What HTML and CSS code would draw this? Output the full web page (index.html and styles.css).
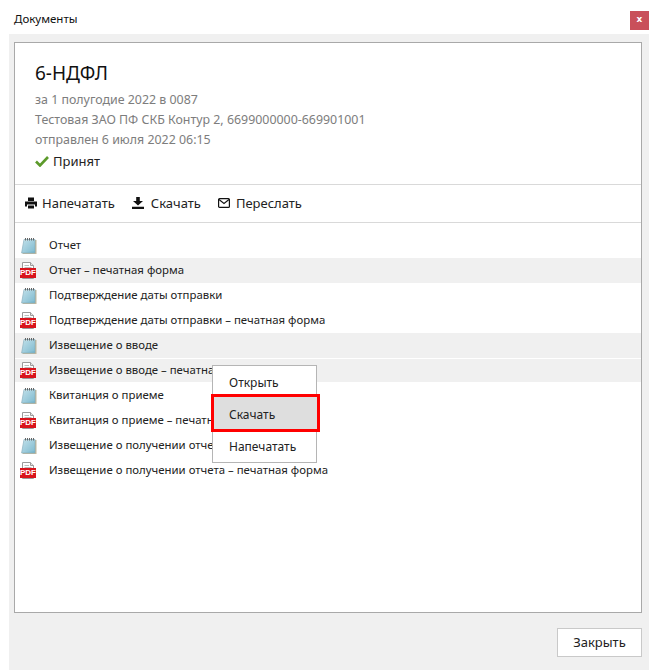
FILE: index.html
```html
<!DOCTYPE html>
<html lang="ru">
<head>
<meta charset="utf-8">
<title>Документы</title>
<link rel="stylesheet" href="styles.css">
</head>
<body>
<svg class="defs" width="0" height="0">
  <defs>
    <linearGradient id="pad" x1="0" y1="0" x2="1" y2="1">
      <stop offset="0" stop-color="#d8eef4"/>
      <stop offset="1" stop-color="#6fb2c9"/>
    </linearGradient>
    <symbol id="note" viewBox="0 0 16 18">
      <path d="M4 3H15.500V17H1.500Z" fill="#c2b89c"/>
      <path d="M3 2.500H14V16H.6Z" fill="url(#pad)" stroke="#86adbb" stroke-width=".7"/>
      <path d="M2.600 5H13.500M2.300 7H13.500M1.900 9H13.500M1.600 11H13.500M1.200 13H13.500" stroke="#9cc9d8" stroke-width=".7"/>
      <path d="M4.500 3.500V1M6.500 3.500V1M8.500 3.500V1M10.500 3.500V1M12.500 3.500V1" stroke="#666" stroke-width="1"/>
    </symbol>
    <symbol id="pdf" viewBox="0 0 16 18">
      <path d="M2.500 .5H10.500L13.500 3.500V16.500H2.500Z" fill="#fff" stroke="#9a9a9a"/>
      <path d="M10.500 .5V3.500H13.500" fill="#e4e4e4" stroke="#9a9a9a"/>
      <path d="M4.500 3.500H9M4.500 5.500H11.500" stroke="#bbb"/>
      <rect x="0" y="6" width="16" height="10" fill="#d9141c"/>
    </symbol>
  </defs>
</svg>
<div class="window">
  <header class="titlebar">
    <span class="title">Документы</span>
    <button class="close" type="button">x</button>
  </header>
  <main class="panel">
    <section class="box">
      <div class="info">
        <h1 class="heading">6-НДФЛ</h1>
        <p class="meta">за 1 полугодие 2022 в 0087</p>
        <p class="meta">Тестовая ЗАО ПФ СКБ Контур 2, 6699000000-669901001</p>
        <p class="meta">отправлен 6 июля 2022 06:15</p>
        <p class="status">
          <svg class="check" viewBox="0 0 14 12" width="14" height="12"><path d="M1 6.500 5 10.500 13 2" fill="none" stroke="#5c9a2b" stroke-width="2.600"/></svg>
          <span>Принят</span>
        </p>
      </div>
      <nav class="toolbar">
        <a class="action">
          <svg viewBox="0 0 12 12" width="12" height="12"><path d="M3 0.500H9V4H3Z M0 4.500H12V9.500H10V7.500H2V9.500H0Z M3 8.500H9V11.500H3Z" fill="#111"/></svg>
          <span>Напечатать</span>
        </a>
        <a class="action wide">
          <svg viewBox="0 0 12 12" width="12" height="12"><path d="M4.200 0H7.800V4H11L6 8.500 1 4H4.200Z M0 9.800H12V12H0Z" fill="#111"/></svg>
          <span>Скачать</span>
        </a>
        <a class="action mid">
          <svg viewBox="0 0 12 10" width="12" height="10"><rect x=".6" y=".6" width="10.800" height="8.800" rx="1" fill="none" stroke="#111" stroke-width="1.200"/><path d="M1 1.500 6 5.500 11 1.500" fill="none" stroke="#111" stroke-width="1.100"/></svg>
          <span>Переслать</span>
        </a>
      </nav>
      <ul class="files">
        <li class="file"><svg class="ficon"><use href="#note"/></svg><span class="fname">Отчет</span></li>
        <li class="file alt"><span class="pdf"><svg class="ficon"><use href="#pdf"/></svg><b>PDF</b></span><span class="fname">Отчет – печатная форма</span></li>
        <li class="file"><svg class="ficon"><use href="#note"/></svg><span class="fname">Подтверждение даты отправки</span></li>
        <li class="file"><span class="pdf"><svg class="ficon"><use href="#pdf"/></svg><b>PDF</b></span><span class="fname">Подтверждение даты отправки – печатная форма</span></li>
        <li class="file alt"><svg class="ficon"><use href="#note"/></svg><span class="fname">Извещение о вводе</span></li>
        <li class="file alt short"><span class="pdf"><svg class="ficon"><use href="#pdf"/></svg><b>PDF</b></span><span class="fname">Извещение о вводе – печатная форма</span></li>
        <li class="file"><svg class="ficon"><use href="#note"/></svg><span class="fname">Квитанция о приеме</span></li>
        <li class="file"><span class="pdf"><svg class="ficon"><use href="#pdf"/></svg><b>PDF</b></span><span class="fname">Квитанция о приеме – печатная форма</span></li>
        <li class="file"><svg class="ficon"><use href="#note"/></svg><span class="fname">Извещение о получении отчета</span></li>
        <li class="file"><span class="pdf"><svg class="ficon"><use href="#pdf"/></svg><b>PDF</b></span><span class="fname">Извещение о получении отчета – печатная форма</span></li>
      </ul>
    </section>
    <footer class="footer">
      <button class="closebtn" type="button">Закрыть</button>
    </footer>
  </main>
  <div class="menu">
    <div class="mitem">Открыть</div>
    <div class="mitem active">Скачать</div>
    <div class="mitem">Напечатать</div>
  </div>
</div>
</body>
</html>
```
FILE: styles.css
```css
* { box-sizing: border-box; }
html, body { margin: 0; padding: 0; }
body {
  width: 659px;
  height: 670px;
  overflow: hidden;
  background: #fff;
  font-family: "Noto Sans", "Open Sans", sans-serif;
  color: #222;
}
.defs { position: absolute; }
.window {
  position: relative;
  display: flex;
  flex-direction: column;
  height: 670px;
}
.titlebar {
  height: 34px;
  flex: none;
  display: flex;
  align-items: flex-start;
  justify-content: space-between;
  padding: 11px 10px 0 14px;
}
.title { font-size: 11.500px; line-height: 16px; color: #111; }
.close {
  width: 19px;
  height: 19px;
  border: 0;
  padding: 0 0 3px;
  background: #c9505a;
  color: #fff;
  font: bold 9px/16px "DejaVu Sans", sans-serif;
}
.panel {
  flex: 1;
  margin: 0 10px 0 9px;
  padding: 8px 7px 0 5px;
  background: #f0f0f0;
  display: flex;
  flex-direction: column;
}
.box {
  height: 571px;
  flex: none;
  background: #fff;
  border: 1px solid #a9a9a9;
  display: flex;
  flex-direction: column;
}
.info {
  height: 142px;
  flex: none;
  padding: 17px 20px 0;
  border-bottom: 1px solid #d9d9d9;
}
.heading {
  margin: 0 0 3px;
  font-size: 19px;
  line-height: 27px;
  font-weight: 400;
  color: #111;
}
.meta {
  margin: 0;
  font-size: 12.400px;
  line-height: 20px;
  color: #7d7d7d;
}
.status {
  margin: 1px 0 0;
  display: flex;
  align-items: center;
  gap: 4px;
  font-size: 13px;
  line-height: 20px;
  color: #222;
}
.toolbar {
  height: 38px;
  flex: none;
  display: flex;
  align-items: center;
  gap: 17px;
  padding: 0 10px 2px;
  border-bottom: 1px solid #d9d9d9;
  font-size: 13px;
  color: #222;
}
.action { display: flex; align-items: center; gap: 5px; }
.wide { gap: 7px; }
.mid { gap: 6px; }
.files {
  list-style: none;
  margin: 10px 0 0;
  padding: 0;
}
.file {
  height: 25px;
  display: flex;
  align-items: center;
  gap: 12px;
  padding: 0 5px 0 6px;
  font-size: 11.400px;
  color: #222;
}
.fname { padding-bottom: 2px; }
.alt { background: #f0f0f0; }
.short { height: 23px; margin: 1px 0; }
.ficon { width: 16px; height: 18px; display: block; flex: none; }
.pdf { position: relative; display: block; width: 16px; height: 18px; flex: none; margin: 0 1px 0 -1px; }
.pdf b {
  position: absolute;
  left: 0;
  right: 0;
  top: 6px;
  text-align: center;
  font: bold 8px/10px "Liberation Sans", sans-serif;
  color: #fff;
}
.footer {
  flex: 1;
  display: flex;
  justify-content: flex-end;
  align-items: flex-start;
  padding-top: 15px;
}
.closebtn {
  width: 85px;
  height: 29px;
  background: #fff;
  border: 1px solid #c9c9c9;
  font: 13px/27px "Noto Sans", sans-serif;
  color: #222;
  padding: 0;
}
.menu {
  position: absolute;
  left: 212px;
  top: 365px;
  width: 105px;
  height: 98px;
  background: #fff;
  border: 1px solid #b5b5b5;
  font-size: 12px;
  color: #222;
  display: flex;
  flex-direction: column;
}
.mitem {
  height: 32px;
  flex: none;
  line-height: 34px;
  padding-left: 16px;
}
.active {
  height: 38px;
  line-height: 32px;
  margin: -4px -4px -2px -2px;
  padding: 2px 0 0 15px;
  border: 3px solid #f00;
  background: #dedede;
}
```
